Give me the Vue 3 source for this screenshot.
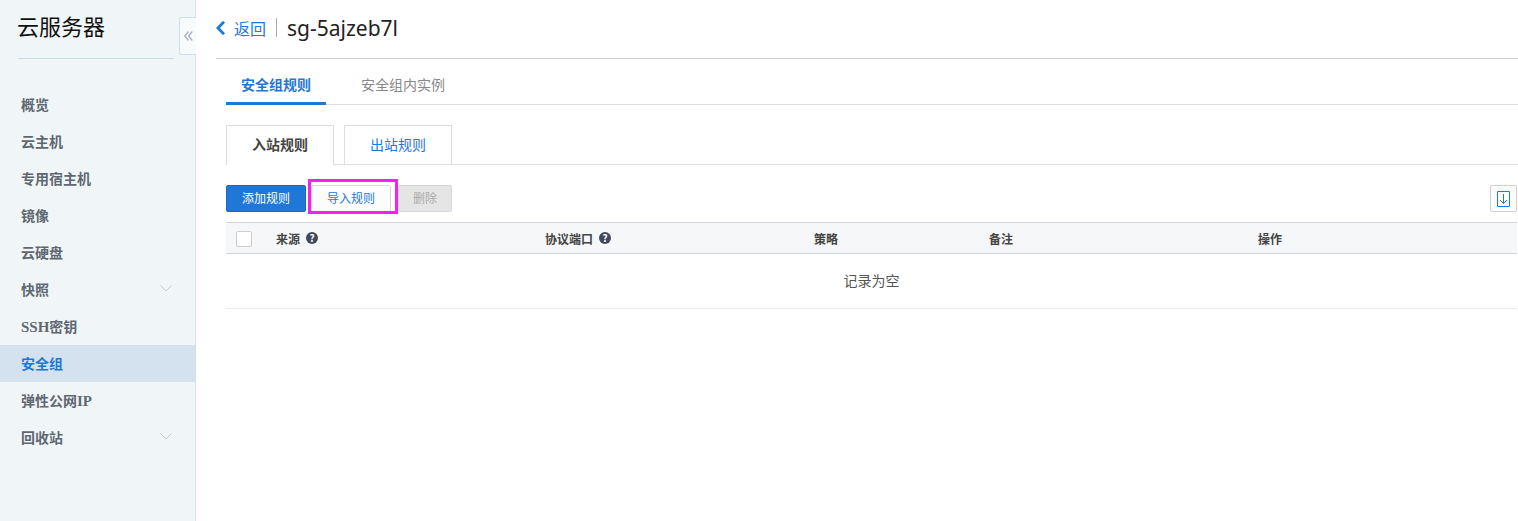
<script setup>
const menu = [
  { label: '概览' }, { label: '云主机' }, { label: '专用宿主机' }, { label: '镜像' }, { label: '云硬盘' },
  { label: '快照', arrow: true }, { label: '密钥', pre: 'SSH' }, { label: '安全组', active: true },
  { label: '弹性公网', post: 'IP' }, { label: '回收站', arrow: true }
]
</script>

<template>
  <div class="page">
    <aside class="side">
      <h1 class="brand">云服务器</h1>
      <nav class="menu">
        <a v-for="m in menu" :key="m.label" class="item" :class="{ active: m.active }">
          <span class="name"><span v-if="m.pre" class="latin">{{ m.pre }}</span>{{ m.label }}<span v-if="m.post" class="latin">{{ m.post }}</span></span>
          <svg v-if="m.arrow" class="chev" width="12" height="7" viewBox="0 0 12 7"><path d="M.5.5 6 6 11.5.5" fill="none" stroke="#c5cbd0" stroke-width="1"/></svg>
        </a>
      </nav>
      <button class="collapse" aria-label="collapse">
        <svg width="9" height="10" viewBox="0 0 9 10"><path d="M4.500.5 .8 5l3.700 4.500M8.300.5 4.600 5l3.700 4.500" fill="none" stroke="#a2b0bd" stroke-width="1.300"/></svg>
      </button>
    </aside>
    <main class="main">
      <header class="head">
        <svg class="back-ic" width="10" height="16" viewBox="0 0 10 16"><path d="M8 1.800 2 8l6 6.200" fill="none" stroke="#1f78d8" stroke-width="2.800"/></svg>
        <a class="back">返回</a>
        <i class="sep"></i>
        <span class="title">sg-5ajzeb7l</span>
      </header>
      <div class="body">
        <div class="tabs">
          <a class="tab on">安全组规则</a>
          <a class="tab">安全组内实例</a>
        </div>
        <div class="cards">
          <a class="card on">入站规则</a>
          <a class="card">出站规则</a>
        </div>
        <div class="tools">
          <button class="btn primary">添加规则</button>
          <span class="mark"><button class="btn plain">导入规则</button></span>
          <button class="btn off">删除</button>
          <button class="dl" aria-label="download">
            <svg width="15" height="18" viewBox="0 0 15 18"><path d="M1.500 1.500h12v15h-12z" fill="none" stroke="#1f78d8" stroke-width="1"/><path d="M7.500 4v9.500M4 10l3.500 3.500L11 10" fill="none" stroke="#1f78d8" stroke-width="1"/></svg>
          </button>
        </div>
        <div class="table">
          <div class="row th">
            <div class="c c0"><i class="check"></i></div>
            <div class="c c1">来源<i class="q">?</i></div>
            <div class="c c2">协议端口<i class="q">?</i></div>
            <div class="c c3">策略</div>
            <div class="c c4">备注</div>
            <div class="c c5">操作</div>
          </div>
          <div class="empty">记录为空</div>
        </div>
      </div>
    </main>
  </div>
</template>

<style>
html, body { margin: 0; background: #fff; }
</style>

<style scoped>
.page { display: flex; width: 1518px; height: 521px; overflow: hidden; font-family: "Noto Sans CJK SC", "Noto Sans", sans-serif; font-size: 12px; color: #444; }
.side { position: relative; box-sizing: border-box; width: 196px; flex: none; background: #f0f6f7; border-right: 1px solid #d6e2e8; }
.brand { margin: 0 21px 0 18px; height: 59px; box-sizing: border-box; padding-top: 9px; border-bottom: 1px solid #c9dcea; font-size: 22px; line-height: 32px; font-weight: 400; color: #111; text-indent: -1px; }
.menu { margin-top: 27px; }
.item { display: flex; align-items: center; justify-content: space-between; box-sizing: border-box; height: 37px; padding: 0 23px 2px 21px; font-size: 14px; font-weight: 700; color: #5f6772; }
.name { font-family: "Liberation Serif", "Noto Sans CJK SC", serif; }
.latin { font-size: 15px; }
.item.active { background: #d4e2f0; color: #1f78d8; }
.collapse { position: absolute; left: 179px; top: 17px; width: 17px; height: 38px; padding: 0; background: #f8fbfc; border: 1px solid #cfe0ec; border-right: 0; border-radius: 3px 0 0 3px; display: flex; align-items: center; justify-content: center; }
.main { flex: 1; min-width: 0; padding-left: 20px; }
.head { display: flex; align-items: center; height: 55px; padding-bottom: 3px; border-bottom: 1px solid #cfcfcf; }
.back-ic { margin-right: 8px; }
.back { font-size: 16px; color: #1f78d8; }
.sep { width: 1px; height: 19px; background: #aaa; margin: 0 10px; }
.title { font-size: 21px; color: #222; font-family: "Noto Sans", sans-serif; }
.body { padding-left: 10px; padding-right: 1px; }
.tabs { display: flex; height: 45px; margin-top: 1px; margin-right: -1px; border-bottom: 1px solid #ddd; box-sizing: border-box; }
.tab { display: flex; align-items: center; justify-content: center; height: 45px; box-sizing: border-box; padding: 3px 15px 0; margin-right: 20px; font-size: 14px; color: #888; }
.tab.on { width: 100px; padding: 5px 0 0; color: #1f78d8; font-weight: 700; border-bottom: 3px solid #1f78d8; }
.cards { display: flex; gap: 10px; height: 39px; margin-top: 20px; margin-right: -1px; border-bottom: 1px solid #ddd; }
.card { display: flex; align-items: center; justify-content: center; box-sizing: border-box; width: 108px; height: 39px; padding-bottom: 2px; border: 1px solid #ddd; border-bottom: 0; font-size: 14px; color: #1f78d8; }
.card.on { height: 40px; padding-bottom: 3px; background: #fff; color: #444; font-weight: 700; }
.tools { display: flex; align-items: center; margin-top: 20px; height: 27px; }
.btn { box-sizing: border-box; height: 27px; padding: 0 0 2px; border-radius: 2px; font: inherit; font-size: 12px; border: 1px solid; }
.primary { width: 80px; background: #1f78d8; border-color: #1668c0; color: #fff; }
.plain { width: 80px; background: #fcfcfc; border-color: #d8d8d8; color: #1f78d8; }
.mark { position: relative; margin-left: 5px; }
.mark::after { content: ""; position: absolute; left: -3px; right: -7px; top: -6px; bottom: -2px; border: 3px solid #f820f0; pointer-events: none; }
.mark .btn { display: block; }
.off { width: 54px; margin-left: 7px; background: #e5e5e5; border-color: #d8d8d8; color: #aaa; }
.dl { margin-left: auto; box-sizing: border-box; width: 27px; height: 27px; padding: 0; background: #fcfcfc; border: 1px solid #d0d0d0; border-radius: 2px; display: flex; align-items: center; justify-content: center; }
.table { margin-top: 10px; }
.row.th { display: flex; align-items: center; height: 32px; box-sizing: border-box; background: #f6f7f9; border-top: 1px solid #d2d3de; border-bottom: 1px solid #d2d3de; font-weight: 700; color: #444; }
.c { display: flex; align-items: center; flex: none; }
.c0 { width: 50px; padding-left: 10px; box-sizing: border-box; }
.c1 { width: 269px; }
.c2 { width: 269px; }
.c3 { width: 175px; }
.c4 { width: 269px; }
.check { width: 14px; height: 14px; margin-top: 2px; border: 1px solid #ccc; border-radius: 2px; background: #fff; }
.q { width: 12px; height: 12px; margin-left: 6px; border-radius: 50%; background: #41485a; color: #fff; font-style: normal; font-size: 10px; font-weight: 700; line-height: 12px; text-align: center; }
.empty { box-sizing: border-box; height: 55px; padding-bottom: 2px; display: flex; align-items: center; justify-content: center; border-bottom: 1px solid #ececf0; font-size: 14px; color: #555; }
</style>
